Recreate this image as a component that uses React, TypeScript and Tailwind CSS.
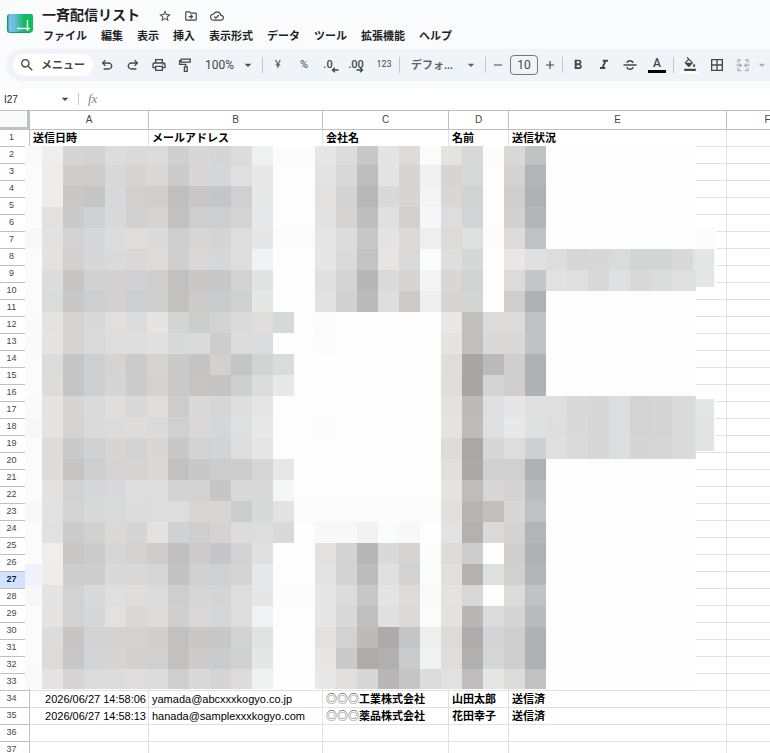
import clsx from 'clsx';
import type { ReactNode } from 'react';
import {
  MdAdd,
  MdArrowDropDown,
  MdBorderAll,
  MdFormatBold,
  MdFormatColorFill,
  MdFormatItalic,
  MdOutlineCloudDone,
  MdOutlineDriveFileMove,
  MdOutlinePrint,
  MdRemove,
  MdSearch,
  MdStarBorder,
} from 'react-icons/md';

const MENUS = [
  'ファイル',
  '編集',
  '表示',
  '挿入',
  '表示形式',
  'データ',
  'ツール',
  '拡張機能',
  'ヘルプ',
];

const COLUMNS = ['A', 'B', 'C', 'D', 'E', 'F'];

const ROW_COUNT = 37;
const SELECTED_ROW = 27;

const CELLS: Record<number, ReactNode[]> = {
  1: ['送信日時', 'メールアドレス', '会社名', '名前', '送信状況'],
  34: [
    '2026/06/27 14:58:06',
    'yamada@abcxxxkogyo.co.jp',
    <Company key="c" name="工業株式会社" />,
    '山田太郎',
    '送信済',
  ],
  35: [
    '2026/06/27 14:58:13',
    'hanada@samplexxxkogyo.com',
    <Company key="c" name="薬品株式会社" />,
    '花田幸子',
    '送信済',
  ],
};

// one token per block: grey level + optional tint (b: blue, s: strong blue, g: green, w: warm)
const MOSAIC = [
  'f9 eew d5w d3 dc da db cf d7 d5 dc f0g fc fc e6 dc c8 e4 dbw fb e3w d8 fc d8w c1b',
  'fb edw cdw cdw d8 d4w d9w cb d7w d5b df e8 fd fd e3 d8 bd e4 d5w f0 d5w d8g fd d3w b3b',
  'fb edw c8w c5 d7b d0w cfw c0 c7w c5b d0 e8g fd fd e1w d3 b8 d9 d5w f3b d7w d2g fd cfw b0b',
  'fb e1w ca d0b d8 d1 d5w c1 ce cdb d4w e7b fd fd e2 d4w be e0 d1w f6b dd d3b fd d1w b4b',
  'f8 e2 d2 d6b dc ddw da ce d6 d5 dd e6 fc fc e5 dc c8 e4 daw eeg dbw dfg fc dbw c0b',
  'fb e2w d1w d6b da d8w dbw cf d8w d6b ddw f1b fd fd e6 da c4 e5w da fbg de d7g fd e7w e0 dd d6 d7 dbg d4g d4g d9 e4g',
  'fb dc c6w d0b d0w d0b cfw c1 c8w c8 d3 e2g fd fd e0 d5 b7 da d5w f3b d7w d2g fd dbw c5b e1 df d8 dfb d9 dcg df e0',
  'fb dbg c8 cdb d1w cdb cf c1w cbw cab d0g e6g fd fd e2 d1 bb de cbw eeb d5w d5g fd cfw b0b',
  'fa e3w d4w d9g dfw dc e4w d4g cdg d3 da ddw d8g fd fb fd fd fd fd fd e8w c0w dc dbw c1b',
  'fa e4w d4w dag dd de e0 d9g da cd dc dbb fd fd fc fd fd fd fd fd e4w c0w d9 d9w c1b',
  'fb dbg c5 ceb d4w cb d4w ca c4 d1w c5g d3g dab fd fd fd fd fd fd fd ddw a6w ba cfw b0b',
  'fb dcw c5 ceb d5 cb d3w c9 c5w c4 cfg dc e8 fd fd fd fd fd fd fd dew a6w d3b cfw b0b',
  'fa e4w d5w d9b dew d9 ddw cc d9 d6 de e5 fd fd fd fd fd fd fd fd e2w bbw deb e6 e0 df d9 d7 dcb d4 d5 da dc',
  'f8 e4w d4w da db dcw da d0 d8w d5b dfg e8 fd fd fc fd fd fd fd fd e3w bcw deb e8 e0g de d9 d6 dcb d4 d5 da dc',
  'fb dcw ca d0b d5w d3 d7w c8 d2 d2b dd e5 fd fd fd fd fd fd fd fd dcw a9w d7g dd ceb df da d7 dcb d5 d6 da dc',
  'fb dcw c5w cdb d4w d4w d8w c1 c8 cc cd d6 e7 fd fd fd fd fd fd fd e0w aaw d0b d0w b0b',
  'fb e2w d2 d6b d8b de dd d3 d2 c6 d9 d9 f6g fd fd fd fd fd fd fd e3w bdw d6 d3w bab',
  'f8 e2 d4 d9g dag dc dd dd d6w d6w cdg d9g e2 fc fc fc fc fc fc fc e0w b5w c0w d7 c0b',
  'fb e1 cb d1 d9w d5 e2w d0b ce d3w dc dd d9 fd f8 f8 f2 fbg f8 fd e3 b2w da d3w b3b',
  'fb eew c8w cb d6 d3w cdw c0 cbw c5b d3 e0 fd fd e1w d3 b7 d9 d4w fc dcw cdg fd cfw b0b',
  'f2s edw cd cd d9 d8 d6 c2 d0 cfb d4w e7b fd fd e3 d3 bc e0 d2 fcg dfw b2w dfg d0w b4b',
  'f8 e4 d2 d8b df ddw dc ce d6 d5 dd e6 fc fc e6 dc c8 e4 dbw fa e3w d8 fd dbw c1b',
  'fb e4w d2 d6b e1w d8w dcw cf d8w d5b ddw f1b fd fd e6 d9 c0 e0 daw fbg e2w b7w dcg d5w bab',
  'fb dc c6w d2b d2w d2w cfw c1 c8w c8 d3 e2g fd fd e1w d2 bbw abw c4b ee dbw adw d3b cfw b0b',
  'fb dbw c8 d3b d5w d1w d0 c1w cbw cab d1g e6g fd fd e6w ca adw b0 cb f2g dew b0 d6g cfw b0b',
  'f9 e3w d4w dbg dcg ddw dc cf d9 d5 dcw f0g fd fd e8 e0w d7 b7w c5w dbb e1w bew e6g dbw c1b',
];

const MOSAIC_COLUMNS = 33;

const TINTS: Record<string, number[]> = {
  b: [-1, 1, 3],
  s: [-5, 0, 10],
  g: [-1, 1, 0],
  w: [1, 0, -2],
};

function toColor(token: string) {
  const level = parseInt(token.slice(0, 2), 16);
  const [r, g, b] = (TINTS[token[2]] ?? [0, 0, 0]).map(n =>
    Math.min(255, level + n),
  );
  return `rgb(${r}, ${g}, ${b})`;
}

function Company({ name }: { name: string }) {
  return (
    <>
      <span className="font-['Noto_Sans_CJK_JP',sans-serif] leading-none font-light text-[#333]">
        ◎◎◎
      </span>
      {name}
    </>
  );
}

function Logo() {
  return (
    <svg className="size-7 shrink-0" viewBox="0 0 28 28" aria-hidden="true">
      <defs>
        <linearGradient id="logo" x1="0" x2="1" y1="0" y2="0">
          <stop offset="0" stopColor="#7cc0ff" />
          <stop offset="0.25" stopColor="#69bddb" />
          <stop offset="0.65" stopColor="#12b95e" />
          <stop offset="1" stopColor="#0fbc5c" />
        </linearGradient>
      </defs>
      <rect x="1" y="5" width="25" height="19" rx="3" fill="#0da44f" />
      <rect x="2.5" y="5" width="24.5" height="18" rx="2" fill="url(#logo)" />
      <path
        d="M21.500 11v11M11 19.500h13"
        stroke="#fff"
        strokeWidth="1.4"
        fill="none"
      />
    </svg>
  );
}

function Symbol({ d }: { d: string }) {
  return (
    <svg className="size-4" viewBox="0 -960 960 960" fill="currentColor">
      <path d={d} />
    </svg>
  );
}

function PaintRoller() {
  return (
    <svg
      className="size-4"
      viewBox="0 0 16 16"
      fill="none"
      stroke="currentColor"
      strokeWidth="1.3">
      <path d="M4.2 2.2h9v3h-9zM4.2 3.7H2.6v3.6h6.2v2.4" />
      <path d="M7.4 9.9h2.8v4.4H7.4z" />
    </svg>
  );
}

function Strikethrough() {
  return (
    <svg
      className="size-4"
      viewBox="0 0 16 16"
      fill="none"
      stroke="currentColor"
      strokeWidth="1.4">
      <path d="M1.5 8h13" />
      <path d="M11 5.8C10.700 4.400 9.600 3.700 8 3.700S5.200 4.400 5 5.800" />
      <path d="M5 10.200c.300 1.400 1.400 2.100 3 2.100s2.800-.7 3-2.100" />
    </svg>
  );
}

function MergeCells() {
  return (
    <svg
      className="size-4"
      viewBox="0 0 16 16"
      fill="none"
      stroke="currentColor"
      strokeWidth="1.4">
      <path d="M6 3H3v3M10 3h3v3M6 13.500H3v-3M10 13.500h3v-3" />
      <path d="M1.500 8.200h4.500M4.500 6.400l1.800 1.800-1.800 1.800M14.500 8.200H10M11.500 6.400L9.700 8.200l1.800 1.800" />
    </svg>
  );
}

function Decimal({ text, reverse }: { text: string; reverse?: boolean }) {
  return (
    <span className="relative font-[Roboto] text-[11px] font-medium">
      {text}
      <svg
        className={clsx(
          'absolute top-2.5 h-1.5 w-2',
          reverse ? 'right-0 rotate-180' : '-right-1.5',
        )}
        viewBox="0 0 8 6"
        fill="none"
        stroke="currentColor"
        strokeWidth="1.300">
        <path d="M7.500 3H1.500M3.800 .8L1.500 3l2.300 2.200" />
      </svg>
    </span>
  );
}

function ToolButton({
  label,
  className,
  children,
}: {
  label: string;
  className?: string;
  children: ReactNode;
}) {
  return (
    <button
      type="button"
      aria-label={label}
      className={clsx(
        'flex h-6 shrink-0 items-center justify-center',
        className ?? 'w-[26px]',
      )}>
      {children}
    </button>
  );
}

function ToolSelect({
  label,
  value,
  className,
}: {
  label: string;
  value: string;
  className?: string;
}) {
  return (
    <div className={clsx('relative flex shrink-0 items-center', className)}>
      <select
        aria-label={label}
        className="w-full appearance-none bg-transparent pl-[7px] outline-none">
        <option>{value}</option>
      </select>
      <MdArrowDropDown className="pointer-events-none absolute right-1.5 size-4" />
    </div>
  );
}

function Divider() {
  return <span className="h-4 w-px shrink-0 bg-[#c7c7c7]" />;
}

function Header() {
  return (
    <header className="flex h-[49px] items-start gap-2 pl-1.5">
      <div className="pt-[9px]">
        <Logo />
      </div>
      <div>
        <div className="flex h-[30px] items-center">
          <h1 className="mr-[18px] text-[14px] font-bold text-[#1f1f1f]">
            一斉配信リスト
          </h1>
          <div className="flex gap-3 pt-0.5 text-[#444746]">
            <button type="button" aria-label="スター">
              <MdStarBorder className="size-3.5" />
            </button>
            <button type="button" aria-label="移動">
              <MdOutlineDriveFileMove className="size-3.5" />
            </button>
            <button type="button" aria-label="ドキュメントのステータス">
              <MdOutlineCloudDone className="size-3.5" />
            </button>
          </div>
        </div>
        <nav className="flex gap-3.5 pl-px text-[11px] leading-3 font-bold text-[#1f1f1f]">
          {MENUS.map(menu => (
            <button type="button" key={menu} className="whitespace-nowrap">
              {menu}
            </button>
          ))}
        </nav>
      </div>
    </header>
  );
}

function Toolbar() {
  return (
    <div className="ml-1.5 flex h-8 items-center overflow-hidden rounded-l-full bg-[#f0f4f9] pl-[7px] text-[11px] text-[#444746]">
      <button
        type="button"
        className="mr-px flex h-[22px] w-20 shrink-0 items-center gap-1.5 rounded-full bg-white pl-1.5 font-bold">
        <MdSearch className="size-4 shrink-0" />
        <span className="whitespace-nowrap">メニュー</span>
      </button>
      <ToolButton label="元に戻す">
        <Symbol d="M280-200v-80h284q63 0 109.500-40T720-420q0-60-46.500-100T564-560H312l104 104-56 56-200-200 200-200 56 56-104 104h252q97 0 169.500 63T806-420q0 94-72.500 157T564-200H280Z" />
      </ToolButton>
      <ToolButton label="やり直し">
        <Symbol d="M396-200q-97 0-169.500-63T154-420q0-94 72.500-157T396-640h252L544-744l56-56 200 200-200 200-56-56 104-104H396q-63 0-109.500 40T240-420q0 60 46.500 100T396-280h284v80H396Z" />
      </ToolButton>
      <ToolButton label="印刷">
        <MdOutlinePrint className="size-4" />
      </ToolButton>
      <ToolButton label="書式を貼り付け">
        <PaintRoller />
      </ToolButton>
      <ToolSelect
        label="ズーム"
        value="100%"
        className="w-16 font-[Roboto] text-[12px]"
      />
      <Divider />
      <ToolButton label="通貨" className="ml-0.5 w-[26px] font-[Roboto]">
        ¥
      </ToolButton>
      <ToolButton label="パーセント" className="w-[26px] font-[Roboto]">
        %
      </ToolButton>
      <ToolButton
        label="小数点以下の桁数を減らす"
        className="w-[26px] pr-1">
        <Decimal text=".0" />
      </ToolButton>
      <ToolButton label="小数点以下の桁数を増やす">
        <Decimal text=".00" reverse />
      </ToolButton>
      <ToolButton
        label="表示形式の詳細設定"
        className="mr-1 w-[26px] pl-1 font-[Roboto] text-[9px]">
        123
      </ToolButton>
      <Divider />
      <ToolSelect
        label="フォント"
        value="デフォ..."
        className="ml-1 w-[81px] font-bold text-[#5f6368]"
      />
      <Divider />
      <ToolButton label="フォントサイズを縮小" className="w-6">
        <MdRemove className="size-3.5" />
      </ToolButton>
      <input
        aria-label="フォントサイズ"
        defaultValue="10"
        className="h-5 w-7 shrink-0 rounded-sm border border-[#747775] bg-transparent text-center font-[Roboto] text-[12px]"
      />
      <ToolButton label="フォントサイズを拡大" className="w-6">
        <MdAdd className="size-3.5" />
      </ToolButton>
      <Divider />
      <ToolButton label="太字" className="ml-0.5 w-[26px]">
        <MdFormatBold className="size-4" />
      </ToolButton>
      <ToolButton label="斜体">
        <MdFormatItalic className="size-4" />
      </ToolButton>
      <ToolButton label="取り消し線">
        <Strikethrough />
      </ToolButton>
      <ToolButton label="テキストの色" className="mr-0.5 w-7 flex-col">
        <span className="font-[Roboto] text-[12px] leading-[13px] font-medium">
          A
        </span>
        <span className="h-[3px] w-[18px] bg-black" />
      </ToolButton>
      <Divider />
      <ToolButton label="塗りつぶしの色" className="ml-0.5 w-7 flex-col">
        <MdFormatColorFill className="size-3.5" />
        <span className="h-[3px] w-[18px] bg-white" />
      </ToolButton>
      <ToolButton label="枠線">
        <MdBorderAll className="size-4" />
      </ToolButton>
      <ToolButton label="セルを結合" className="w-[26px] text-[#b0b3b6]">
        <MergeCells />
      </ToolButton>
      <ToolButton label="結合の種類" className="w-3 text-[#b0b3b6]">
        <MdArrowDropDown className="size-4 shrink-0" />
      </ToolButton>
    </div>
  );
}

function FormulaBar() {
  return (
    <div className="flex h-[22px] items-center bg-white pl-1 text-[10px] text-[#1f1f1f]">
      <input
        aria-label="名前ボックス"
        defaultValue="I27"
        className="w-[53px] outline-none"
      />
      <button type="button" aria-label="名前付き範囲">
        <MdArrowDropDown className="size-4 text-[#444746]" />
      </button>
      <span className="mx-[5px] h-3 w-px bg-[#c7c7c7]" />
      <label
        htmlFor="formula"
        className="w-6 pl-1 font-['Liberation_Serif'] text-[13px] text-[#80868b] italic">
        fx
      </label>
      <input id="formula" className="min-w-0 flex-1 outline-none" />
    </div>
  );
}

function Mosaic() {
  return (
    <div className="absolute top-[35px] left-[25px]">
      <div className="grid grid-cols-[17px_repeat(31,21px)_3px] grid-rows-[19px_repeat(24,21px)_20px]">
        {MOSAIC.map((line, y) => {
          const tokens = line.split(' ');
          return Array.from({ length: MOSAIC_COLUMNS }, (_, x) => (
            <span
              key={`${y}-${x}`}
              style={{ backgroundColor: toColor(tokens[x] ?? 'fd') }}
            />
          ));
        })}
      </div>
      <div className="absolute top-[81px] left-full h-[60px] w-[21px] bg-[#fcfcfc] pt-[22px]">
        <div className="h-[21px] w-[18px] bg-[#e4e6e5]" />
        <div className="h-[17px] w-[18px] bg-[#e3e5e8]" />
      </div>
      <div className="absolute top-[253px] left-full h-[53px] w-5 bg-[#fdfdfd]">
        <div className="h-[18px] w-[18px] bg-[#e4e6e5]" />
        <div className="h-[34px] w-[18px] bg-[#e3e4e7]" />
      </div>
    </div>
  );
}

function Sheet() {
  return (
    <main className="relative min-h-0 flex-1 overflow-hidden border-t border-[#c0c0c0] bg-white">
      <table className="w-full min-w-[809px] table-fixed border-separate border-spacing-0 text-[11px] text-black">
        <colgroup>
          <col className="w-[30px]" />
          <col className="w-[119px]" />
          <col className="w-[174px]" />
          <col className="w-[126px]" />
          <col className="w-[60px]" />
          <col className="w-[218px]" />
          <col />
        </colgroup>
        <thead>
          <tr className="h-[19px] text-[10px] leading-4 text-[#444746]">
            <td className="border-r-[3px] border-b-[3px] border-[#c0c0c0] bg-[#f8f9fa] p-0" />
            {COLUMNS.map(column => (
              <th
                key={column}
                scope="col"
                className="border-r border-b border-[#c0c0c0] p-0 font-normal">
                {column}
              </th>
            ))}
          </tr>
        </thead>
        <tbody>
          {Array.from({ length: ROW_COUNT }, (_, i) => i + 1).map(row => (
            <tr key={row} className="h-[17px] leading-4">
              <th
                scope="row"
                className={clsx(
                  'border-r border-b border-[#c0c0c0] p-0 pr-1.5 align-top text-[9px] leading-[14px]',
                  row === SELECTED_ROW
                    ? 'bg-[#d3e3fd] font-bold text-[#041e49]'
                    : 'font-normal text-[#444746]',
                )}>
                {row}
              </th>
              {COLUMNS.map((column, i) => (
                <td
                  key={column}
                  className={clsx(
                    'overflow-hidden border-r border-b border-[#e1e1e1] p-0 whitespace-nowrap',
                    row > 1 && i === 0 ? 'pr-0.5 text-right' : 'pl-[3px]',
                    (row === 1 || i > 1) && 'font-bold',
                  )}>
                  {CELLS[row]?.[i]}
                </td>
              ))}
            </tr>
          ))}
        </tbody>
      </table>
      <Mosaic />
    </main>
  );
}

export default function App() {
  return (
    <div className="flex h-screen flex-col overflow-hidden bg-[#f9fbfd] font-['Liberation_Sans','Noto_Sans_CJK_JP',sans-serif]">
      <Header />
      <Toolbar />
      <div className="pt-[7px]">
        <FormulaBar />
      </div>
      <Sheet />
    </div>
  );
}
